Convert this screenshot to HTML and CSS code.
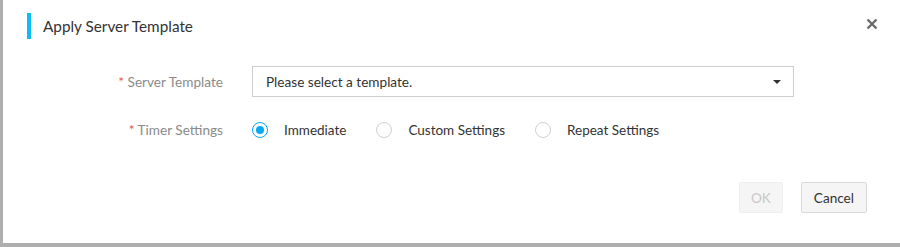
FILE: index.html
```html
<!DOCTYPE html>
<html lang="en">
  <head>
    <meta charset="UTF-8" />
    <title>Apply Server Template</title>
    <link rel="stylesheet" href="styles.css">
  </head>
  <body>
    <div class="dialog">
      <div class="dialog-header">
        <h2 class="dialog-title">Apply Server Template</h2>
        <button class="close-btn" type="button" aria-label="Close">
          <svg width="12" height="12" viewBox="0 0 12 12">
            <path d="M1.5 1.5 L10.5 10.5 M10.5 1.5 L1.5 10.5" stroke="#6a6a6a" stroke-width="2.4" />
          </svg>
        </button>
      </div>
      <form class="dialog-body">
        <div class="form-row">
          <label class="form-label"><span class="req">*</span> Server Template</label>
          <div class="select">
            <span>Please select a template.</span>
            <span class="caret"></span>
          </div>
        </div>
        <div class="form-row">
          <label class="form-label"><span class="req">*</span> Timer Settings</label>
          <div class="radios">
            <label class="radio checked"><span class="dot"></span>Immediate</label>
            <label class="radio"><span class="dot"></span>Custom Settings</label>
            <label class="radio"><span class="dot"></span>Repeat Settings</label>
          </div>
        </div>
      </form>
      <div class="dialog-footer">
        <button class="btn" type="button" disabled>OK</button>
        <button class="btn" type="button">Cancel</button>
      </div>
    </div>
  </body>
</html>
```

FILE: styles.css
```css
body {
  margin: 0;
  background: #aeaeae;
  font-family: "Lato", "Noto Sans", Arial, sans-serif;
  color: #333;
  height: 247px;
  overflow: hidden;
}
.dialog {
  margin-left: 3px;
  width: 900px;
  height: 243px;
  background: #fff;
  display: flex;
  flex-direction: column;
}
.dialog-header {
  display: flex;
  align-items: center;
  justify-content: space-between;
  padding: 13px 25px 0 24px;
}
.dialog-title {
  margin: 0;
  font-size: 15.3px;
  font-weight: normal;
  line-height: 26px;
  border-left: 4px solid #0cbcf5;
  padding-left: 12px;
}
.close-btn {
  border: none;
  background: none;
  padding: 0;
  width: 12px;
  height: 12px;
  margin-top: -4px;
  cursor: pointer;
}
.close-btn svg {
  display: block;
}
.dialog-body {
  padding-top: 27px;
}
.form-row {
  display: flex;
  align-items: center;
}
.form-row + .form-row {
  margin-top: 25px;
}
.form-label {
  width: 220px;
  text-align: right;
  margin-right: 29px;
  font-size: 13.6px;
  color: #8a8a8a;
}
.req {
  color: #e8514b;
}
.select {
  box-sizing: border-box;
  width: 542px;
  height: 31px;
  border: 1px solid #cfcfcf;
  display: flex;
  align-items: center;
  justify-content: space-between;
  padding: 0 12px 0 13px;
  font-size: 13.6px;
}
.caret {
  border-left: 4px solid transparent;
  border-right: 4px solid transparent;
  border-top: 4px solid #333;
}
.radios {
  display: flex;
  align-items: center;
}
.radio {
  display: flex;
  align-items: center;
  font-size: 13.5px;
  margin-right: 30px;
}
.radio .dot {
  width: 14px;
  height: 14px;
  border: 1px solid #d0d0d0;
  border-radius: 50%;
  margin-right: 16px;
  position: relative;
}
.radio.checked .dot {
  border-color: #0ba7f2;
}
.radio.checked .dot::after {
  content: "";
  position: absolute;
  left: 3px;
  top: 3px;
  width: 8px;
  height: 8px;
  border-radius: 50%;
  background: #0ba7f2;
}
.dialog-footer {
  display: flex;
  justify-content: flex-end;
  padding-top: 44px;
  margin-right: 36px;
}
.btn {
  height: 31px;
  padding: 0 11px;
  margin-left: 18px;
  background: #f5f5f5;
  border: 1px solid #d9d9d9;
  border-radius: 2px;
  font-family: inherit;
  font-size: 13.6px;
  color: #333;
  cursor: pointer;
}
.btn + .btn {
  padding: 0 12px;
}
.btn:disabled {
  color: #c8c8c8;
  border-color: #eeeeee;
  cursor: default;
}
```
